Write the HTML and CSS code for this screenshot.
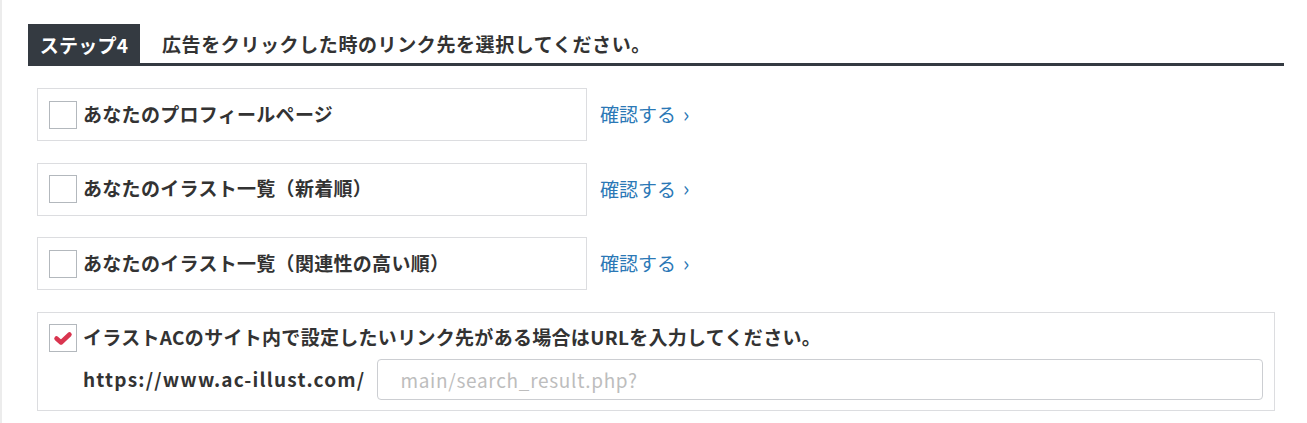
FILE: index.html
```html
<!DOCTYPE html>
<html lang="ja">
<head>
<meta charset="utf-8">
<link rel="stylesheet" href="styles.css">
</head>
<body>
<div class="page">
  <section class="step">
    <div class="step-head">
      <div class="step-label">ステップ4</div>
      <div class="step-title">広告をクリックした時のリンク先を選択してください。</div>
    </div>
    <div class="options">
      <div class="opt-row">
        <label class="opt-box"><span class="cb"></span><span class="opt-text">あなたのプロフィールページ</span></label>
        <a class="confirm" href="#">確認する<span class="chev">›</span></a>
      </div>
      <div class="opt-row">
        <label class="opt-box"><span class="cb"></span><span class="opt-text">あなたのイラスト一覧（新着順）</span></label>
        <a class="confirm" href="#">確認する<span class="chev">›</span></a>
      </div>
      <div class="opt-row">
        <label class="opt-box"><span class="cb"></span><span class="opt-text">あなたのイラスト一覧（関連性の高い順）</span></label>
        <a class="confirm" href="#">確認する<span class="chev">›</span></a>
      </div>
      <div class="opt-url">
        <label class="url-line"><span class="cb checked"><svg width="20" height="16" viewBox="0 0 20 16"><path d="M3.5 8.5 L8 12.5 L16.5 4.5" fill="none" stroke="#d9354f" stroke-width="4.5" stroke-linecap="round" stroke-linejoin="round"/></svg></span><span class="opt-text">イラストACのサイト内で設定したいリンク先がある場合はURLを入力してください。</span></label>
        <div class="url-input-line">
          <span class="url-prefix">https://www.ac-illust.com/</span>
          <input class="url-input" type="text" placeholder="main/search_result.php?">
        </div>
      </div>
    </div>
  </section>
</div>
</body>
</html>
```
FILE: styles.css
```css
html, body {
  margin: 0;
  padding: 0;
  background: #fff;
}
body {
  font-family: "Noto Sans CJK JP", "Noto Sans", sans-serif;
  color: #333;
}
.page {
  border-left: 2px solid #ececec;
  min-height: 423px;
  box-sizing: border-box;
  padding: 24px 23px 0 26px;
}
.step-head {
  display: flex;
  align-items: center;
  border-bottom: 3px solid #343a41;
  height: 39px;
}
.step-label {
  background: #343a41;
  color: #fff;
  font-weight: bold;
  font-size: 19px;
  width: 112px;
  height: 42px;
  box-sizing: border-box;
  margin-bottom: -3px;
  align-self: flex-start;
  display: flex;
  align-items: center;
  justify-content: center;
  letter-spacing: 0.3px;
  padding-bottom: 2px;
}
.step-title {
  margin-left: 22px;
  font-weight: bold;
  font-size: 19px;
  letter-spacing: 0.6px;
  color: #333;
}
.options {
  margin: 22px 0 0 9px;
  display: flex;
  flex-direction: column;
  gap: 21.7px;
}
.opt-row {
  display: flex;
  align-items: center;
}
.opt-box {
  width: 550px;
  height: 53px;
  box-sizing: border-box;
  border: 1px solid #dcdde0;
  display: flex;
  align-items: center;
  padding-left: 11px;
}
.cb {
  width: 28px;
  height: 28px;
  box-sizing: border-box;
  border: 1px solid #b3b8bd;
  background: #fff;
  flex: none;
  display: flex;
  align-items: center;
  justify-content: center;
}
.opt-text {
  margin-left: 6px;
  font-weight: bold;
  font-size: 19px;
  letter-spacing: 0.3px;
  color: #333;
  padding-bottom: 3px;
}
.confirm {
  margin-left: 13px;
  color: #2b78b6;
  text-decoration: none;
  font-size: 19px;
  display: flex;
  align-items: center;
  padding-bottom: 2px;
}
.chev {
  margin-left: 7px;
  font-size: 21px;
  position: relative;
  top: -1px;
}
.opt-url {
  width: 1238px;
  height: 99px;
  box-sizing: border-box;
  border: 1px solid #dcdde0;
  padding: 11px 11px 0 11px;
}
.url-line {
  display: flex;
  align-items: center;
  height: 28px;
}
.url-input-line {
  display: flex;
  align-items: center;
  margin-top: 7px;
  padding-left: 34px;
}
.url-prefix {
  font-weight: bold;
  font-size: 19px;
  color: #333;
  letter-spacing: 1.2px;
  white-space: nowrap;
  padding-bottom: 2px;
}
.url-input {
  margin-left: 12px;
  flex: 1;
  height: 41px;
  box-sizing: border-box;
  border: 1px solid #ccced2;
  border-radius: 4px;
  padding: 0 22px;
  font-family: "Noto Sans CJK JP", "Noto Sans", sans-serif;
  font-size: 19px;
  letter-spacing: 0.7px;
  color: #333;
  outline: none;
}
.url-input::placeholder {
  color: #bdbdbd;
}
```
